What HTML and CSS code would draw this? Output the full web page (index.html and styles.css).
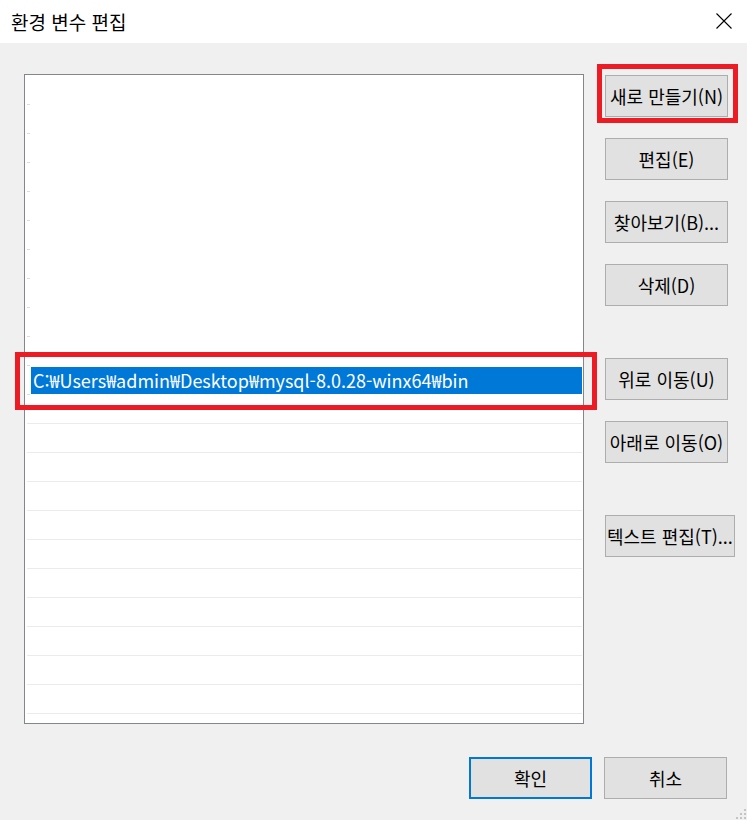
FILE: index.html
```html
<!DOCTYPE html>
<html lang="ko">
<head>
<meta charset="utf-8">
<title>환경 변수 편집</title>
<link rel="stylesheet" href="styles.css">
</head>
<body>
<div class="window">
  <div class="titlebar">
    <span class="title">환경 변수 편집</span>
    <svg class="close" width="16" height="16" viewBox="0 0 16 16"><path d="M0.5 0.5 L15.5 15.5 M15.5 0.5 L0.5 15.5" stroke="#000" stroke-width="1.1" fill="none"/></svg>
  </div>
  <div class="main">
    <div class="listbox">
      <div class="row short"></div>
      <div class="row short"></div>
      <div class="row short"></div>
      <div class="row short"></div>
      <div class="row short"></div>
      <div class="row short"></div>
      <div class="row short"></div>
      <div class="row short"></div>
      <div class="row short"></div>
      <div class="row short"></div>
      <div class="row short selrow"><div class="sel">C:₩Users₩admin₩Desktop₩mysql-8.0.28-winx64₩bin</div></div>
      <div class="row full"></div>
      <div class="row full"></div>
      <div class="row full"></div>
      <div class="row full"></div>
      <div class="row full"></div>
      <div class="row full"></div>
      <div class="row full"></div>
      <div class="row full"></div>
      <div class="row full"></div>
      <div class="row full"></div>
      <div class="row full"></div>
      <div class="row full"></div>
    </div>
    <div class="buttons">
      <button class="btn">새로 만들기(N)</button>
      <button class="btn">편집(E)</button>
      <button class="btn">찾아보기(B)...</button>
      <button class="btn">삭제(D)</button>
      <div class="spacer"></div>
      <button class="btn">위로 이동(U)</button>
      <button class="btn">아래로 이동(O)</button>
      <div class="spacer"></div>
      <button class="btn">텍스트 편집(T)...</button>
    </div>
  </div>
  <div class="footer">
    <button class="btn ok">확인</button>
    <button class="btn">취소</button>
  </div>
  <div class="mark mark-new"></div>
  <div class="mark mark-path"></div>
  <svg class="grip" width="12" height="12" viewBox="0 0 12 12">
    <rect x="9" y="1" width="2" height="2" fill="#c4c4c4"/>
    <rect x="5" y="5" width="2" height="2" fill="#c4c4c4"/>
    <rect x="9" y="5" width="2" height="2" fill="#c4c4c4"/>
    <rect x="1" y="9" width="2" height="2" fill="#c4c4c4"/>
    <rect x="5" y="9" width="2" height="2" fill="#c4c4c4"/>
    <rect x="9" y="9" width="2" height="2" fill="#c4c4c4"/>
  </svg>
</div>
</body>
</html>
```
FILE: styles.css
```css
* { box-sizing: border-box; }
html, body { margin: 0; padding: 0; }
body {
  width: 747px;
  height: 820px;
  background: #f0f0f0;
  font-family: "Noto Sans CJK KR", "Noto Sans", sans-serif;
  color: #000;
  overflow: hidden;
}
.window {
  position: relative;
  width: 747px;
  height: 820px;
}
.titlebar {
  height: 43px;
  background: #fff;
  display: flex;
  align-items: center;
  justify-content: space-between;
  padding: 0 15px 0 11px;
}
.title {
  font-size: 19px;
  line-height: 43px;
  margin-top: -1px;
}
.close { display: block; margin-top: -2px; }
.main {
  display: flex;
  gap: 21px;
  padding: 31px 0 0 24px;
}
.listbox {
  width: 560px;
  height: 650px;
  border: 1px solid #82878f;
  background: #fff;
  padding: 1px 0 0 1px;
  overflow: hidden;
}
.row {
  height: 29px;
}
.row.short {
  background-image: linear-gradient(#dcdcdc, #dcdcdc);
  background-repeat: no-repeat;
  background-size: 3px 1px;
  background-position: 1px 100%;
}
.row.full {
  margin: 0 1px 0 1px;
  border-bottom: 1px solid #ebebeb;
}
.selrow { padding-top: 1px; }
.sel {
  margin-left: 5px;
  margin-right: 1px;
  height: 27px;
  background: #0078d7;
  color: #fff;
  font-size: 18px;
  line-height: 27px;
  padding-left: 2px;
  white-space: nowrap;
}
.buttons {
  display: flex;
  flex-direction: column;
  align-items: flex-start;
  gap: 21px;
  padding-top: 1px;
}
.spacer { height: 10px; }
.btn {
  min-width: 123px;
  height: 42px;
  padding: 0 1px;
  background: #e1e1e1;
  border: 1px solid #adadad;
  border-radius: 0;
  font-family: "Noto Sans CJK KR", "Noto Sans", sans-serif;
  font-size: 18px;
  color: #000;
  white-space: nowrap;
  display: flex;
  align-items: center;
  justify-content: center;
}
.footer {
  display: flex;
  justify-content: flex-end;
  gap: 12px;
  padding: 33px 20px 0 0;
}
.btn.ok {
  border: 2px solid #0078d7;
}
.mark {
  position: absolute;
  border: 5px solid #ed1c24;
}
.mark-new { left: 597px; top: 64px; width: 141px; height: 59px; }
.mark-path { left: 15px; top: 352px; width: 582px; height: 58px; }
.grip { position: absolute; right: 0; bottom: 0; }
```
